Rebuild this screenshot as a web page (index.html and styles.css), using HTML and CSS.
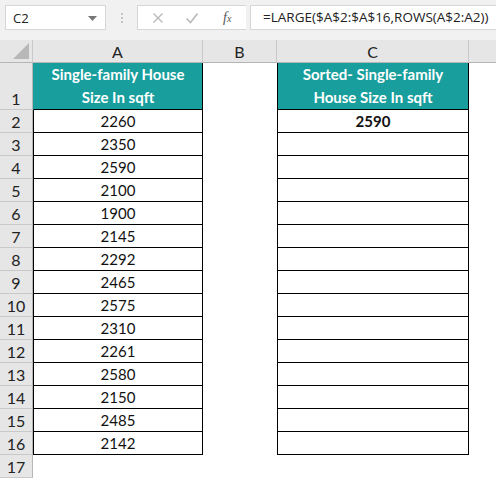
FILE: index.html
```html
<!DOCTYPE html>
<html lang="en">
<head>
    <meta charset="UTF-8">
    <title>LARGE sort</title>
    <link rel="stylesheet" href="styles.css">
</head>
<body>
    <div class="toolbar">
        <div class="name-box">
            <span>C2</span>
            <svg class="caret" width="9" height="5" viewBox="0 0 9 5"><path d="M0 0h9L4.5 5z" fill="#777"/></svg>
        </div>
        <div class="grip"><i></i><i></i><i></i></div>
        <div class="fx-buttons">
            <svg width="12" height="12" viewBox="0 0 12 12"><path d="M1.5 1.5l9 9M10.5 1.5l-9 9" stroke="#b9b9b9" stroke-width="1.4"/></svg>
            <svg width="14" height="12" viewBox="0 0 14 12"><path d="M1.5 6.5l4 4L12.5 1.5" stroke="#b9b9b9" stroke-width="1.6" fill="none"/></svg>
            <span class="fx">f<sub>x</sub></span>
        </div>
        <div class="formula">=LARGE($A$2:$A$16,ROWS(A$2:A2))</div>
    </div>

    <div class="sheet" id="sheet">
        <div class="corner"><svg width="16" height="16" viewBox="0 0 16 16"><path d="M16 0V16H0z" fill="#b8b8b8"/></svg></div>
        <div class="col-head">A</div>
        <div class="col-head">B</div>
        <div class="col-head">C</div>
        <div class="col-head last"></div>

        <div class="row-head tall">1</div>
        <div class="cell head tall">Single-family House<br>Size In sqft</div>
        <div class="cell blank tall"></div>
        <div class="cell head tall">Sorted- Single-family<br>House Size In sqft</div>
        <div class="cell blank tall"></div>
    </div>

    <script>
        // fill data rows 2..16, row 17 stays empty
        var sizes = [2260, 2350, 2590, 2100, 1900, 2145, 2292, 2465, 2575, 2310, 2261, 2580, 2150, 2485, 2142];
        var sheet = document.getElementById('sheet');
        function add(cls, text) {
            var d = document.createElement('div');
            d.className = cls;
            d.textContent = text;
            sheet.appendChild(d);
        }
        sizes.forEach(function (v, i) {
            add('row-head', i + 2);
            add('cell data', v);
            add('cell blank', '');
            add('cell data result', i === 0 ? '2590' : '');
            add('cell blank', '');
        });
        add('row-head', 17);
        add('cell blank', '');
        add('cell blank', '');
        add('cell blank', '');
        add('cell blank', '');
    </script>
</body>
</html>
```

FILE: styles.css
```css
body {
    margin: 0;
    width: 496px;
    height: 478px;
    overflow: hidden;
    background: #ffffff;
    font-family: "Lato", "Liberation Sans", sans-serif;
}
.toolbar {
    height: 40px;
    background: #f1f1f1;
    display: flex;
    align-items: flex-start;
    padding-top: 5px;
    box-sizing: border-box;
}
.name-box {
    margin-left: 5px;
    width: 101px;
    height: 25px;
    box-sizing: border-box;
    background: #fff;
    border: 1px solid #d6d6d6;
    display: flex;
    align-items: center;
    justify-content: space-between;
    padding: 0 8px 0 7px;
    font-family: "Open Sans", "Liberation Sans", sans-serif;
    font-size: 13px;
    color: #222;
}
.caret {
    margin-top: 1px;
}
.grip {
    width: 31px;
    height: 25px;
    display: flex;
    flex-direction: column;
    align-items: center;
    justify-content: center;
    gap: 2px;
}
.grip i {
    display: block;
    width: 2px;
    height: 2px;
    background: #c4c4c4;
}
.fx-buttons {
    width: 109px;
    height: 25px;
    box-sizing: border-box;
    background: #fff;
    border: 1px solid #d6d6d6;
    border-right: none;
    display: flex;
    align-items: center;
    padding-left: 14px;
    gap: 21px;
}
.fx {
    font-family: "Liberation Serif", serif;
    font-style: italic;
    font-size: 14px;
    color: #555;
    margin-left: 3px;
}
.fx sub {
    font-size: 10px;
    vertical-align: 0;
}
.formula {
    flex: 1;
    height: 25px;
    box-sizing: border-box;
    background: #fff;
    border: 1px solid #d6d6d6;
    border-right: none;
    margin-left: 4px;
    padding-left: 12px;
    line-height: 23px;
    font-family: "Open Sans", "Liberation Sans", sans-serif;
    font-size: 13.5px;
    color: #222;
}
.sheet {
    display: grid;
    grid-template-columns: 33px 170px 74px 192px 1fr;
    grid-template-rows: 23px 47px;
    grid-auto-rows: 23px;
    background: #f1f1f1;
}
.corner {
    background: #e6e6e6;
    border-right: 1px solid #c9c9c9;
    border-bottom: 1px solid #b6b6b6;
    display: flex;
    align-items: flex-end;
    justify-content: flex-end;
    padding: 0 3px 3px 0;
}
.col-head {
    background: #e6e6e6;
    border-right: 1px solid #c9c9c9;
    border-bottom: 1px solid #b6b6b6;
    display: flex;
    align-items: center;
    justify-content: center;
    font-size: 16px;
    color: #222;
}
.col-head.last {
    border-right: none;
}
.row-head {
    background: #e6e6e6;
    border-right: 1px solid #b6b6b6;
    border-bottom: 1px solid #c9c9c9;
    display: flex;
    align-items: flex-end;
    justify-content: center;
    padding-bottom: 1px;
    font-size: 16px;
    color: #222;
}
.cell {
    background: #fff;
    display: flex;
    align-items: center;
    justify-content: center;
    font-size: 15px;
    color: #111;
}
.cell.head {
    background: #189e9c;
    color: #fff;
    font-weight: bold;
    text-align: center;
    line-height: 23px;
    border-left: 1px solid #189e9c;
    border-right: 1px solid #000;
    border-bottom: 1px solid #000;
}
.cell.head:nth-child(9) {
    border-left: 1px solid #000;
}
.cell.data {
    border-left: 1px solid #000;
    border-right: 1px solid #000;
    border-bottom: 1px solid #000;
}
.cell.result {
    font-weight: bold;
}
.cell.blank {
    background: #fff;
}
```
